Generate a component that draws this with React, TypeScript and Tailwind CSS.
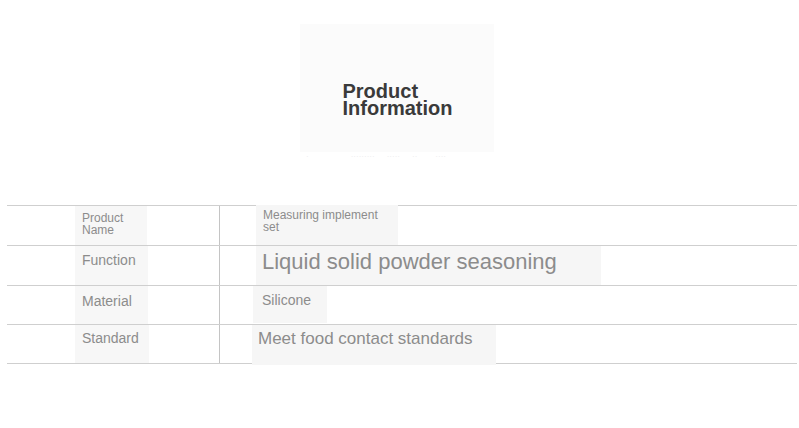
const rows = [
  {
    label: 'Product Name',
    h: 'h-[40px]',
    labelCls: 'text-[12px] leading-[12px] pt-[6px] w-[72px]',
    value: 'Measuring implement set',
    valueBox: 'ml-[36px] w-[142px] -mt-[1px] h-[40px] pl-[7px] pt-[4px]',
    valueCls: 'text-[12px] leading-[12px] w-[120px]',
  },
  {
    label: 'Function',
    h: 'h-[40px]',
    labelCls: 'text-[14px] leading-[16px] pt-[6px] w-[73px]',
    value: 'Liquid solid powder seasoning',
    valueBox: 'ml-[36px] w-[345px] h-[39px] pl-[6px] pt-[3px]',
    valueCls: 'text-[22px] leading-[26px]',
  },
  {
    label: 'Material',
    h: 'h-[39px]',
    labelCls: 'text-[14px] leading-[16px] pt-[7px] w-[73px]',
    value: 'Silicone',
    valueBox: 'ml-[33px] w-[74px] h-[37px] pl-[9px] pt-[6px]',
    valueCls: 'text-[14px] leading-[16px]',
  },
  {
    label: 'Standard',
    h: 'h-[39px]',
    labelCls: 'text-[14px] leading-[16px] pt-[5px] w-[74px]',
    value: 'Meet food contact standards',
    valueBox: 'ml-[32px] w-[244px] h-[40px] pl-[6px] pt-[4px]',
    valueCls: 'text-[17px] leading-[20px]',
  },
];

export default function App() {
  return (
    <div className="w-[799px] h-[428px] bg-white overflow-hidden font-['Liberation_Sans',Arial,sans-serif]">
      <div className="flex justify-center pt-[24px]">
        <div className="ml-[-6px] w-[194px] h-[128px] bg-[#fbfbfb] flex flex-col pl-[43px] pt-[59px]">
          <div className="text-[20px] leading-[17px] font-bold text-[#3a3a3a]">Product</div>
          <div className="text-[20px] leading-[17px] font-bold text-[#3a3a3a]">Information</div>
        </div>
      </div>
      <div className="flex h-[10px] mt-[1px] pl-[306px] gap-[12px] text-[8px] leading-[8px] text-[#ebebeb]">
        <span>·</span>
        <span className="ml-[30px]">·········</span>
        <span>·····</span>
        <span>··</span>
        <span className="ml-[6px]">····</span>
      </div>
      <div className="mt-[42px] ml-[7px] w-[790px] border-t border-[#cfcfcf]">
        {rows.map((r) => (
          <div key={r.label} className={`flex border-b border-[#cfcfcf] text-[#8c8c8c] ${r.h}`}>
            <div className="w-[213px] h-full border-r border-[#c4c4c4] flex">
              <div className={`ml-[68px] h-full bg-[#f7f7f7] pl-[7px] ${r.labelCls}`}>{r.label}</div>
            </div>
            <div className="flex-1 flex items-start">
              <div className={`bg-[#f6f6f6] ${r.valueBox}`}>
                <div className={r.valueCls}>{r.value}</div>
              </div>
            </div>
          </div>
        ))}
      </div>
    </div>
  );
}
